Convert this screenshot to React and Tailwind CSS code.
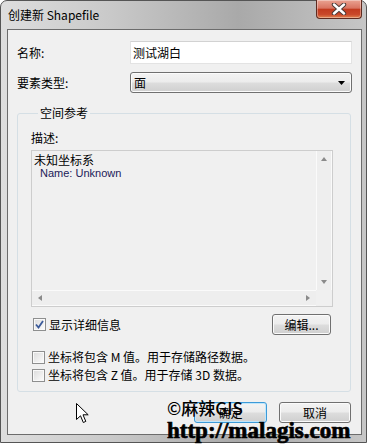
import React from 'react';

const cjk = "font-['Noto_Sans_CJK_SC','Noto_Sans',sans-serif]";
const btnBg = 'bg-[linear-gradient(#f3f3f3_0%,#ececec_48%,#dddddd_52%,#cfcfcf_100%)]';

const Checkbox = ({ checked }) => (
  <span className="w-[13px] h-[13px] shrink-0 border border-[#8e8f8f] bg-[#f4f4f4] flex items-center justify-center">
    <span className="w-[11px] h-[11px] border border-[#f9f9f9] bg-gradient-to-br from-[#dedede] to-[#fafafa] flex items-center justify-center">
      {checked && (
        <svg width="9" height="9" viewBox="0 0 9 9">
          <path d="M1 4.5 L3.5 7.5 L8 1" fill="none" stroke="#3b5a9a" strokeWidth="1.8" />
        </svg>
      )}
    </span>
  </span>
);

const Button = ({ children, primary, className }) => (
  <button
    className={`h-[21px] rounded-[3px] border ${
      primary ? 'border-[#3c9ad8] shadow-[inset_0_0_0_1px_#bfe6fb]' : 'border-[#707070] shadow-[inset_0_0_0_1px_#fbfbfb]'
    } ${btnBg} text-[12px] leading-none text-black flex items-center justify-center ${className}`}
  >
    {children}
  </button>
);

const Arrow = ({ dir }) => {
  const d = {
    up: 'M0 4 L3 0 L6 4 Z',
    down: 'M0 0 L6 0 L3 4 Z',
    left: 'M4 0 L4 6 L0 3 Z',
    right: 'M0 0 L4 3 L0 6 Z',
  }[dir];
  const vertical = dir === 'up' || dir === 'down';
  return (
    <svg width={vertical ? 6 : 4} height={vertical ? 4 : 6} viewBox={vertical ? '0 0 6 4' : '0 0 4 6'}>
      <path d={d} fill="#8a8a8a" />
    </svg>
  );
};

export default function App() {
  return (
    <div className={`w-[367px] h-[445px] bg-white relative overflow-hidden ${cjk}`}>
      <div className="w-[367px] h-[443px] rounded-t-[7px] border border-[#555] bg-[linear-gradient(90deg,#dedede_0%,#c9c9c9_30%,#a9a9a9_65%,#c6c6c6_100%)] flex flex-col pl-[6px] pr-[4px] pb-[7px]">
        {/* title bar */}
        <div className="h-[28px] flex items-start justify-between shrink-0">
          <span className="pt-[6px] pl-[1px] text-[12px] leading-[16px] text-black">创建新 Shapefile</span>
          <div className="w-[46px] h-[19px] -mt-[1px] rounded-b-[4px] border border-t-0 border-[#5e2b20] bg-[linear-gradient(#eaa392_0%,#d97461_45%,#c23b1f_52%,#c9482a_80%,#e0834f_100%)] shadow-[inset_0_0_0_1px_rgba(255,255,255,0.35)] flex items-center justify-center">
            <svg width="16" height="12" viewBox="0 0 16 12">
              <path d="M3 1.5 L13 10.5 M13 1.5 L3 10.5" stroke="#4a3a36" strokeWidth="4.4" strokeLinecap="round" />
              <path d="M3 1.5 L13 10.5 M13 1.5 L3 10.5" stroke="#ffffff" strokeWidth="2.4" strokeLinecap="round" />
            </svg>
          </div>
        </div>

        {/* client area */}
        <div className="flex-1 border border-[#6c6c6c] bg-[#f0f0f0] flex flex-col pt-[11px] pl-[9px] pr-[9px] text-[12px] text-black">
          <div className="flex items-center h-[23px]">
            <span className="w-[113px] leading-[16px]">名称:</span>
            <div className="flex-1 h-[23px] bg-white border border-[#e3e3e3] border-t-[#d2d2d2] flex items-center pl-[2px] leading-[16px]">
              测试湖白
            </div>
          </div>
          <div className="flex items-center h-[21px] mt-[8px]">
            <span className="w-[113px] leading-[16px]">要素类型:</span>
            <div className={`flex-1 h-[21px] rounded-[3px] border border-[#707070] ${btnBg} shadow-[inset_0_0_0_1px_#fbfbfb] flex items-center justify-between pl-[3px] pr-[6px] leading-[16px]`}>
              <span>面</span>
              <svg width="7" height="4" viewBox="0 0 7 4">
                <path d="M0 0 L7 0 L3.5 4 Z" fill="#000" />
              </svg>
            </div>
          </div>

          {/* spatial reference group */}
          <fieldset className="mt-[12px] mr-[1px] border border-[#d5dfe5] rounded-[3px] pl-[13px] pr-[17px] pb-[7px]">
            <legend className="ml-[7px] px-[2px] leading-[16px]">空间参考</legend>
            <div className="mt-[9px] leading-[16px]">描述:</div>
            <div className="mt-[4px] h-[157px] border border-[#cdcdcd] flex flex-col">
              <div className="flex flex-1 min-h-0">
                <div className="flex-1 pl-[2px] pt-[2px]">
                  <div className="leading-[14px]">未知坐标系</div>
                  <div className="pl-[6px] leading-[12px] text-[11px] font-['Liberation_Sans',sans-serif] text-[#1b2058]">
                    Name: Unknown
                  </div>
                </div>
                <div className="w-[16px] border-l border-r border-[#fafafa] bg-[#eeeeee] flex flex-col items-center justify-between py-[6px]">
                  <Arrow dir="up" />
                  <Arrow dir="down" />
                </div>
              </div>
              <div className="flex h-[16px]">
                <div className="flex-1 border-t border-b border-[#fafafa] bg-[#eeeeee] flex items-center justify-between px-[6px]">
                  <Arrow dir="left" />
                  <Arrow dir="right" />
                </div>
                <div className="w-[16px] bg-[#f0f0f0]" />
              </div>
            </div>

            <div className="mt-[8px] h-[19px] flex items-center justify-between px-[2px]">
              <label className="flex items-center gap-[3px] leading-[16px]">
                <Checkbox checked />
                显示详细信息
              </label>
              <Button className="w-[59px] h-[19px]">编辑...</Button>
            </div>

            <div className="mt-[14px] h-[18px] flex items-center gap-[3px] pl-[1px] leading-[16px]">
              <Checkbox />
              <span>坐标将包含 M 值。用于存储路径数据。</span>
            </div>
            <div className="h-[18px] flex items-center gap-[3px] pl-[1px] leading-[16px]">
              <Checkbox />
              <span>坐标将包含 Z 值。用于存储 3D 数据。</span>
            </div>
          </fieldset>

          <div className="mt-[10px] flex justify-end gap-[12px] pr-[1px]">
            <Button primary className="w-[73px]">确定</Button>
            <Button className="w-[72px]">取消</Button>
          </div>
        </div>
      </div>

      {/* mouse pointer */}
      <svg className="absolute left-[76px] top-[403px]" width="13" height="21" viewBox="0 0 13 21">
        <path d="M0.5 0.5 L0.5 16.5 L4.5 12.8 L7.3 19.5 L9.8 18.4 L7 11.8 L12.2 11.8 Z" fill="#fff" stroke="#000" strokeWidth="1" strokeLinejoin="miter" />
      </svg>

      {/* watermark */}
      <div className="absolute left-[167px] top-[397px] text-[17px] leading-[22px] font-medium text-black">©麻辣GIS</div>
      <div className="absolute left-[167px] top-[419px] text-[23px] leading-[24px] font-bold text-black font-['Liberation_Serif',serif] [-webkit-text-stroke:0.7px_black]">
        http://malagis.com
      </div>
    </div>
  );
}
